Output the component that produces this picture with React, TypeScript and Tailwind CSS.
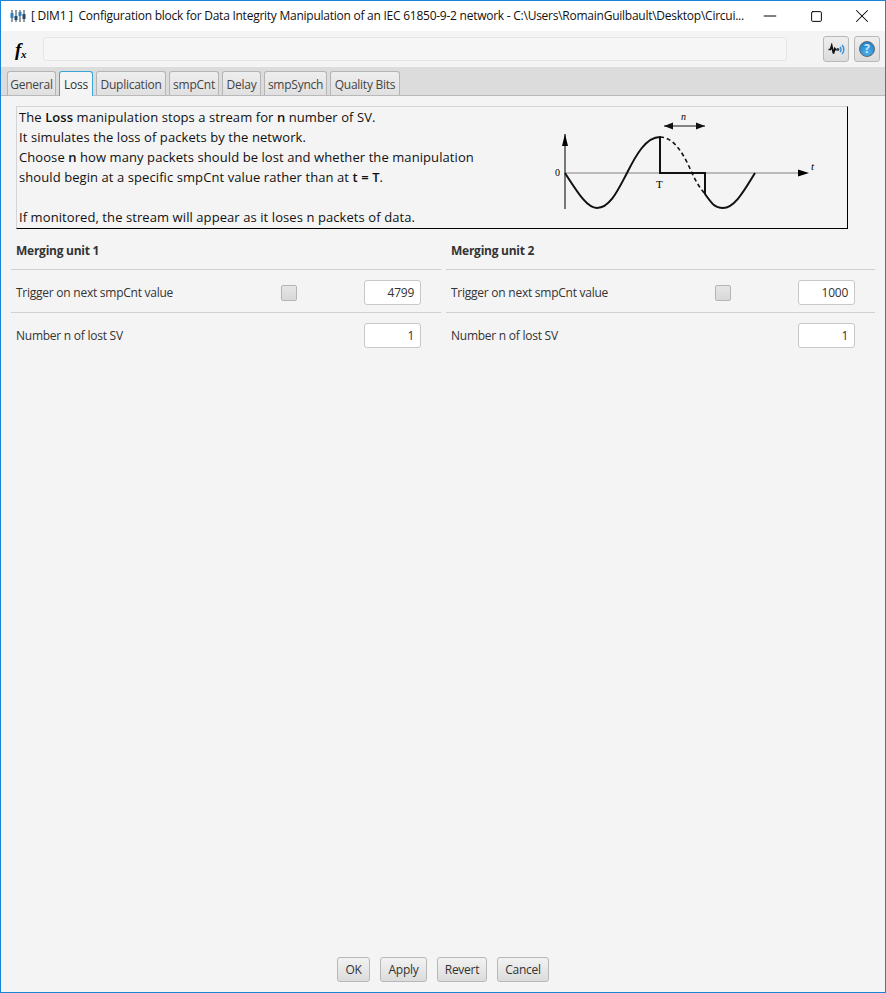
import { X, Minus, Square } from 'lucide-react'

const tabs = ['General', 'Loss', 'Duplication', 'smpCnt', 'Delay', 'smpSynch', 'Quality Bits']
const tabWidths: Record<string, string> = {
  General: 'w-[49px]',
  Loss: 'w-[34px]',
  Duplication: 'w-[70px]',
  smpCnt: 'w-[50px]',
  Delay: 'w-[39px]',
  smpSynch: 'w-[63px]',
  'Quality Bits': 'w-[70px]',
}

function AppIcon() {
  return (
    <svg width="16" height="16" viewBox="0 0 16 16" className="shrink-0">
      <path d="M2 2v12M6 2v12M10 2v12M14 2v12" stroke="#2b3a4a" strokeWidth="1" />
      <rect x="0.5" y="5" width="3" height="5" fill="#2f7fc0" />
      <rect x="4.5" y="8" width="3" height="4" fill="#27496b" />
      <rect x="8.5" y="4" width="3" height="4" fill="#2f7fc0" />
      <rect x="12.5" y="6" width="3" height="5" fill="#27496b" />
    </svg>
  )
}

function Waveform() {
  return (
    <svg width="290" height="118" viewBox="0 0 290 118" className="shrink-0">
      <path d="M35 66H270" stroke="#a8a8a8" strokeWidth="1.5" />
      <path d="M35 27V102" stroke="#222" strokeWidth="1.2" />
      <path d="M35 27l-3 12h6z" fill="#000" />
      <path d="M268 62.5l11 3.5l-11 3.500z" fill="#000" />
      <path d="M35 66C48 86 57 101 67 101C80 101 88 83 97 66C106 48 116 30 130 30V66H175V87C182 97 185 101 193 101C205 101 215 82 225 66" fill="none" stroke="#111" strokeWidth="2" />
      <path d="M130 30C145 30 155 50 162 66C166 75 170 81 175 87" fill="none" stroke="#111" strokeWidth="1.6" strokeDasharray="4 3" />
      <path d="M134 19H175" stroke="#111" strokeWidth="1" />
      <path d="M134 19l9-3.500v7zM175 19l-9-3.500v7z" fill="#111" />
      <text x="25" y="69" fontSize="10" fontFamily="Liberation Serif, serif">0</text>
      <text x="126" y="81" fontSize="11" fontFamily="Liberation Serif, serif">T</text>
      <text x="151" y="13" fontSize="10" fontStyle="italic" fontFamily="Liberation Serif, serif">n</text>
      <text x="281" y="63" fontSize="11" fontStyle="italic" fontFamily="Liberation Serif, serif">t</text>
    </svg>
  )
}

function UnitPanel({ title, trigger, width, checkClass, inputMargin }: { title: string; trigger: string; width: string; checkClass: string; inputMargin: string }) {
  return (
    <div className={`${width} shrink-0`}>
      <div className="pl-[5px] h-[37px] flex items-center font-bold text-[12px] text-[#333333] border-b border-[#d0d0d0]">
        {title}
      </div>
      <div className="h-[43px] pt-[2px] flex items-center pl-[5px] border-b border-[#d0d0d0] text-[12px] text-[#333333]">
        <span className="mt-[2px]">Trigger on next smpCnt value</span>
        <span className={`${checkClass} mt-[2px] w-[16px] h-[16px] rounded-[2px] border border-[#b5b5b5] bg-gradient-to-b from-[#e6e6e6] to-[#d8d8d8]`} />
        <span className={`ml-auto ${inputMargin} w-[57px] h-[25px] rounded-[3px] border border-[#c8c8c8] bg-white text-right pr-[6px] leading-[23px] text-[#333333]`}>
          {trigger}
        </span>
      </div>
      <div className="h-[43px] pt-[1px] flex items-center pl-[5px] text-[12px] text-[#333333]">
        <span className="mt-[2px]">Number n of lost SV</span>
        <span className={`ml-auto ${inputMargin} w-[57px] h-[25px] rounded-[3px] border border-[#c8c8c8] bg-white text-right pr-[6px] leading-[23px] text-[#333333]`}>
          1
        </span>
      </div>
    </div>
  )
}

function FooterButton({ label, width }: { label: string; width: string }) {
  return (
    <button className={`${width} h-[25px] rounded-[3px] border border-[#b8b8b8] bg-gradient-to-b from-[#f2f2f2] to-[#dcdcdc] text-[12px] text-[#333333]`}>
      {label}
    </button>
  )
}

export default function App() {
  return (
    <div className="w-[886px] h-[993px] flex flex-col bg-[#f4f4f4] border-x border-b border-t border-[#1883d7] overflow-hidden font-['Open_Sans','Noto_Sans',sans-serif] tracking-[-0.25px]">
      <div className="h-[30px] shrink-0 bg-white flex items-center pl-[9px] text-[12px] text-[#111111]">
        <AppIcon />
        <span className="ml-[5px] whitespace-pre">[ DIM1 ]  Configuration block for Data Integrity Manipulation of an IEC 61850-9-2 network - C:\Users\RomainGuilbault\Desktop\Circui...</span>
        <div className="ml-auto flex items-center shrink-0">
          <div className="w-[46px] flex justify-center"><Minus size={20} strokeWidth={1.2} className="text-black" /></div>
          <div className="w-[46px] flex justify-center"><Square size={13} strokeWidth={1.8} className="text-black" /></div>
          <div className="w-[46px] flex justify-center"><X size={22} strokeWidth={1.1} className="text-black" /></div>
        </div>
      </div>

      <div className="h-[36px] shrink-0 flex items-center pl-[14px] pr-[5px] bg-[#f4f4f4]">
        <span className="w-[28px] text-[19px] font-bold italic font-['Liberation_Serif',serif] text-black leading-none">
          f<sub className="text-[11px]">x</sub>
        </span>
        <div className="w-[744px] h-[24px] rounded-[3px] border border-[#e6e6e6] bg-[#f6f6f6]" />
        <div className="ml-auto flex gap-[5px]">
          <div className="w-[26px] h-[26px] rounded-[3px] border border-[#b8b8b8] bg-gradient-to-b from-[#eeeeee] to-[#dcdcdc] flex items-center justify-center">
            <svg width="17" height="13" viewBox="0 0 17 13">
              <path d="M0.500 6.500h2l1.200-4l1.800 8l1.300-5l1 1.200h1" fill="none" stroke="#111" strokeWidth="1.700" />
              <circle cx="10" cy="6.500" r="1.400" fill="#444" />
              <path d="M12 4a3.500 3.500 0 0 1 0 5M14 2a6.500 6.500 0 0 1 0 9" fill="none" stroke="#2a8fe0" strokeWidth="1.400" />
            </svg>
          </div>
          <div className="w-[26px] h-[26px] rounded-[3px] border border-[#b8b8b8] bg-gradient-to-b from-[#eeeeee] to-[#dcdcdc] flex items-center justify-center">
            <span className="w-[16px] h-[16px] rounded-full bg-[radial-gradient(circle_at_50%_75%,#4fb4ee,#1573be)] border border-[#666666] text-[#cfe6f7] text-[12px] font-bold leading-[14px] text-center">?</span>
          </div>
        </div>
      </div>

      <div className="h-[29px] shrink-0 flex items-end gap-[3px] pl-[6px] bg-[#dcdcdc] border-b border-[#b9b9b9]">
        {tabs.map((t) =>
          t === 'Loss' ? (
            <div key={t} className={`${tabWidths[t]} h-[25px] -mb-px rounded-t-[3px] border border-b-0 border-[#3aa6d8] bg-[#f4f4f4] text-center text-[12px] leading-[25px] text-[#333333]`}>
              {t}
            </div>
          ) : (
            <div key={t} className={`${tabWidths[t]} h-[24px] rounded-t-[3px] border border-b-0 border-[#b5b5b5] bg-gradient-to-b from-[#eeeeee] to-[#e0e0e0] text-center text-[12px] leading-[25px] text-[#444444]`}>
              {t}
            </div>
          ),
        )}
      </div>

      <div className="flex-1 flex flex-col pt-[10px] pl-[10px]">
        <div className="ml-[5px] w-[832px] h-[123px] shrink-0 flex justify-between border-t border-l border-[#d4d4d4] border-b border-r border-b-black border-r-black">
          <div className="pl-[2px] text-[13px] leading-[20px] text-[#111111] tracking-[0.08px]">
            <div>The <b className="font-semibold">Loss</b> manipulation stops a stream for <b className="font-semibold">n</b> number of SV.</div>
            <div>It simulates the loss of packets by the network.</div>
            <div>Choose <b className="font-semibold">n</b> how many packets should be lost and whether the manipulation</div>
            <div>should begin at a specific smpCnt value rather than at <b className="font-semibold">t = T</b>.</div>
            <div>&nbsp;</div>
            <div>If monitored, the stream will appear as it loses n packets of data.</div>
          </div>
          <div className="mr-[27px]"><Waveform /></div>
        </div>
        <div className="flex gap-[5px] mt-[4px]">
          <UnitPanel title="Merging unit 1" trigger="4799" width="w-[430px]" checkClass="ml-[108px]" inputMargin="mr-[20px]" />
          <UnitPanel title="Merging unit 2" trigger="1000" width="w-[429px]" checkClass="ml-[107px]" inputMargin="mr-[20px]" />
        </div>
        <div className="mt-auto mb-[10px] flex justify-center gap-[10px] pr-[10px]">
          <FooterButton label="OK" width="w-[33px]" />
          <FooterButton label="Apply" width="w-[47px]" />
          <FooterButton label="Revert" width="w-[50px]" />
          <FooterButton label="Cancel" width="w-[52px]" />
        </div>
      </div>
    </div>
  )
}
